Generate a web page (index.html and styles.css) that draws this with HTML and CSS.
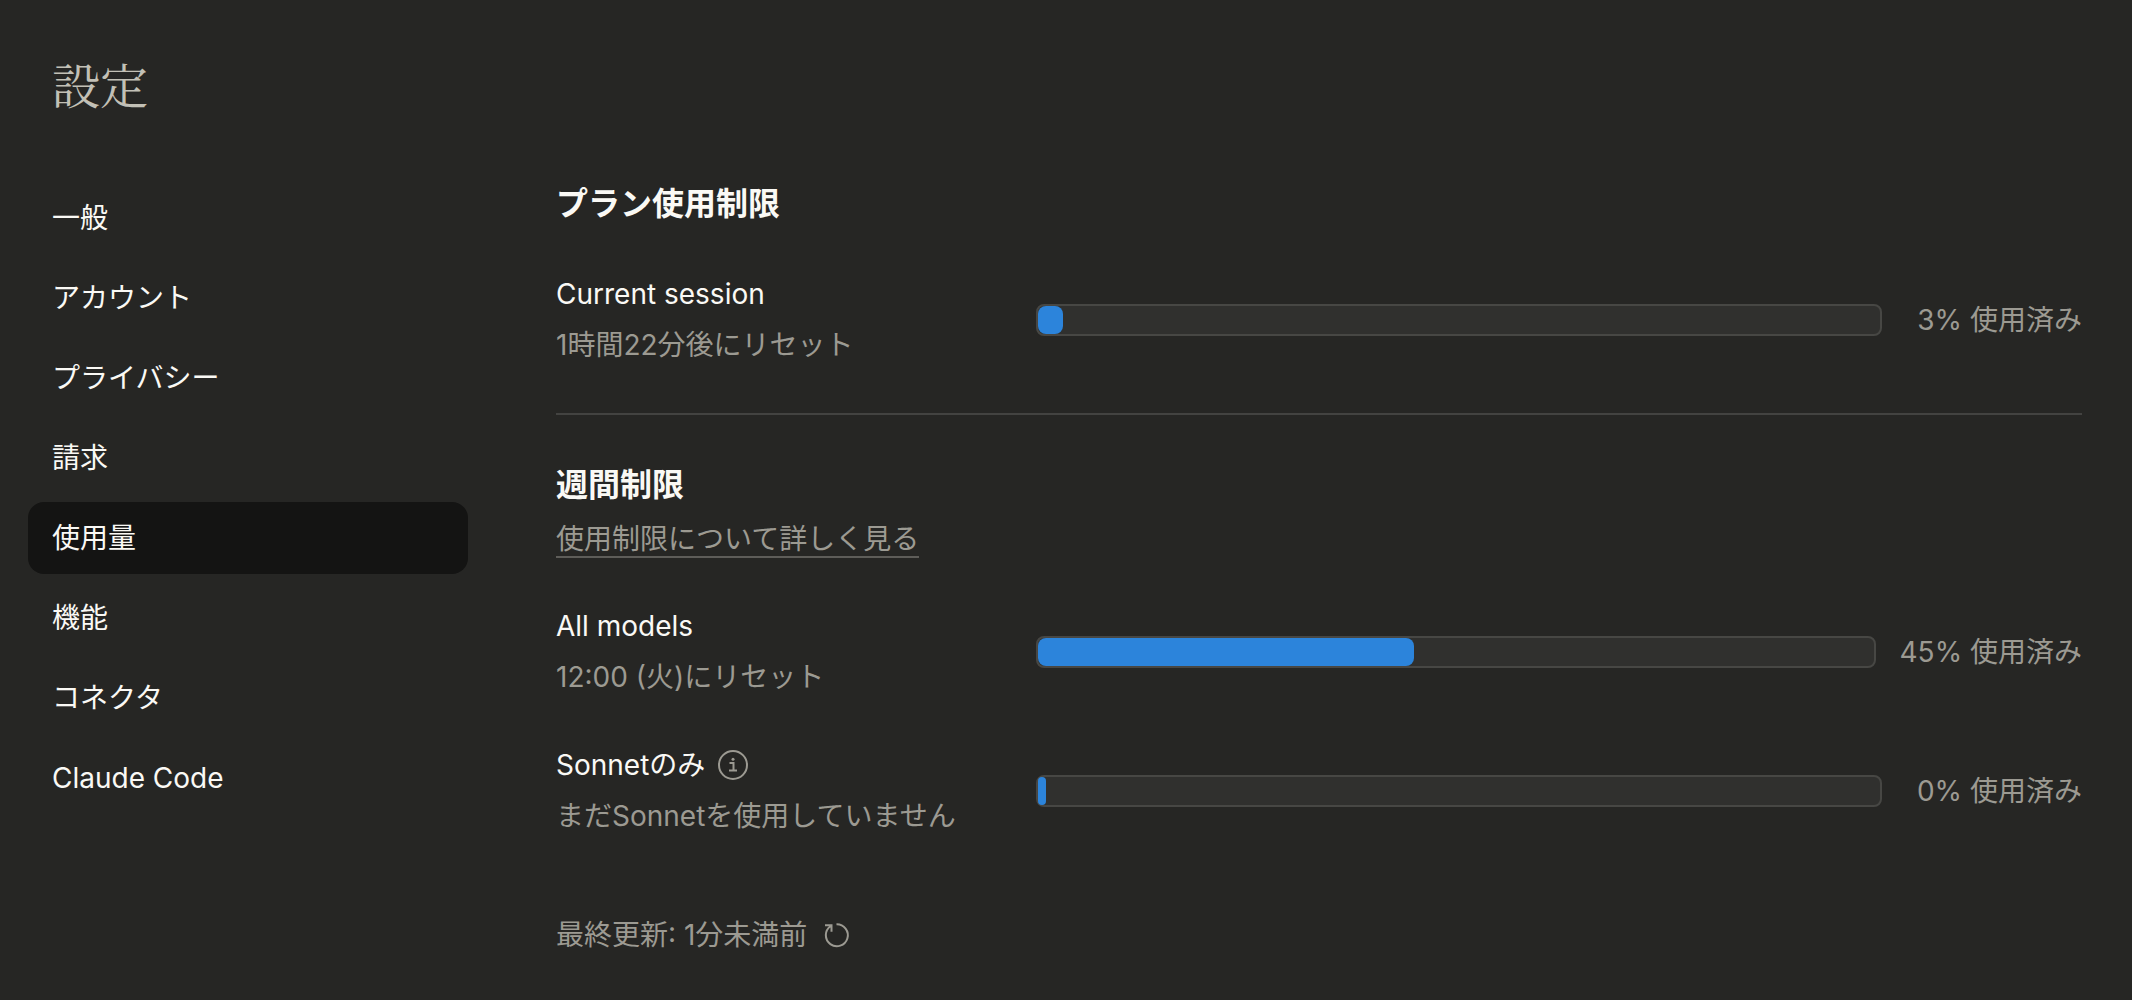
FILE: index.html
```html
<!DOCTYPE html>
<html lang="ja">
<head>
<meta charset="utf-8">
<meta name="viewport" content="width=device-width, initial-scale=1">
<title>設定</title>
<link rel="stylesheet" href="styles.css">
</head>
<body>
<div class="page">
  <h1 class="page-title">設定</h1>
  <div class="layout">
    <nav class="nav" aria-label="設定">
      <a class="nav-item" href="#general">一般</a>
      <a class="nav-item" href="#account">アカウント</a>
      <a class="nav-item" href="#privacy">プライバシー</a>
      <a class="nav-item" href="#billing">請求</a>
      <a class="nav-item active" href="#usage" aria-current="page">使用量</a>
      <a class="nav-item" href="#features">機能</a>
      <a class="nav-item" href="#connectors">コネクタ</a>
      <a class="nav-item" href="#claude-code">Claude Code</a>
    </nav>
    <main class="content">
      <section class="section">
        <h2 class="heading">プラン使用制限</h2>
        <div class="limit">
          <div class="limit-info">
            <div class="limit-name" id="session">Current session</div>
            <div class="muted">1時間22分後にリセット</div>
          </div>
          <div class="meter" role="progressbar" aria-labelledby="session" aria-valuenow="3" aria-valuemin="0" aria-valuemax="100"><div class="meter-fill" style="width: 3%"></div></div>
          <div class="percent">3% 使用済み</div>
        </div>
      </section>
      <hr class="divider">
      <section class="section">
        <div class="heading-group">
          <h2 class="heading">週間制限</h2>
          <a class="more" href="#limits">使用制限について詳しく見る</a>
        </div>
        <div class="limit">
          <div class="limit-info">
            <div class="limit-name" id="all-models">All models</div>
            <div class="muted">12:00 (火)にリセット</div>
          </div>
          <div class="meter" role="progressbar" aria-labelledby="all-models" aria-valuenow="45" aria-valuemin="0" aria-valuemax="100"><div class="meter-fill" style="width: 45%"></div></div>
          <div class="percent">45% 使用済み</div>
        </div>
        <div class="limit">
          <div class="limit-info">
            <div class="limit-name">
              <span id="sonnet">Sonnetのみ</span>
              <button class="icon-button" type="button" aria-label="詳細">
                <svg class="icon-info" viewBox="0 0 32 32" fill="none" stroke="currentColor" stroke-width="2">
                  <circle cx="16" cy="16" r="14"/>
                  <path d="M12.5 14h4v7.5M12 21.5h8"/>
                  <circle cx="16" cy="10.200" r="1.500" fill="currentColor" stroke="none"/>
                </svg>
              </button>
            </div>
            <div class="muted">まだSonnetを使用していません</div>
          </div>
          <div class="meter" role="progressbar" aria-labelledby="sonnet" aria-valuenow="0" aria-valuemin="0" aria-valuemax="100"><div class="meter-fill" style="width: 0%"></div></div>
          <div class="percent">0% 使用済み</div>
        </div>
      </section>
      <footer class="updated muted">
        <span>最終更新: 1分未満前</span>
        <button class="icon-button" type="button" aria-label="更新">
          <svg class="icon-refresh" viewBox="0 0 28 28" fill="none" stroke="currentColor" stroke-width="2">
            <path d="M13.500 3.200A11 11 0 1 1 7.500 5.200M2 4.200h6.500v6.600"/>
          </svg>
        </button>
      </footer>
    </main>
  </div>
</div>
</body>
</html>
```
FILE: styles.css
```css
* {
  box-sizing: border-box;
}

body {
  margin: 0;
  background: #262624;
  color: #faf9f5;
  font-family: Inter, "Noto Sans CJK JP", sans-serif;
  font-size: 28px;
  font-weight: 400;
  line-height: 40px;
}

.page {
  min-height: 100vh;
  padding: 56px 50px 40px 28px;
}

.page-title {
  margin: 0 0 70px;
  padding-left: 24px;
  color: #c2c0b6;
  font-family: "Noto Serif CJK JP", "Noto Serif JP", "Noto Sans CJK JP", serif;
  font-size: 48px;
  font-weight: 400;
  line-height: 56px;
}

.layout {
  display: flex;
  align-items: flex-start;
  gap: 88px;
}

.nav {
  display: flex;
  flex: none;
  flex-direction: column;
  gap: 8px;
  width: 440px;
}

.nav-item {
  padding: 16px 24px;
  border-radius: 16px;
  color: inherit;
  text-decoration: none;
}

.nav-item.active {
  background: #141413;
}

.content {
  flex: 1;
  min-width: 0;
}

.section {
  display: flex;
  flex-direction: column;
  gap: 48px;
}

.heading {
  margin: 0;
  font-size: 32px;
  font-weight: 700;
  line-height: 44px;
}

.heading-group {
  display: flex;
  flex-direction: column;
  align-items: flex-start;
  gap: 15px;
}

.more {
  border-bottom: 2px solid #5e5d59;
  color: #9c9a92;
  line-height: 34px;
  text-decoration: none;
}

.limit {
  display: flex;
  align-items: center;
  gap: 24px;
}

.limit-info {
  display: flex;
  flex: none;
  flex-direction: column;
  gap: 11px;
  width: 456px;
  white-space: nowrap;
}

.limit-name {
  display: flex;
  align-items: center;
  gap: 12px;
}

.muted {
  color: #9c9a92;
}

.meter {
  flex: 1;
  height: 32px;
  border: 2px solid #474744;
  border-radius: 8px;
  background: #30302e;
}

.meter-fill {
  min-width: 8px;
  height: 100%;
  border-radius: 8px;
  background: #2c84db;
}

.percent {
  flex: none;
  min-width: 176px;
  color: #9c9a92;
  text-align: right;
  white-space: nowrap;
}

.divider {
  height: 2px;
  margin: 48px 0;
  border: 0;
  background: #434341;
}

.updated {
  display: flex;
  align-items: center;
  gap: 16px;
  margin-top: 79px;
}

.icon-button {
  display: flex;
  padding: 0;
  border: 0;
  background: none;
  color: #9c9a92;
  cursor: pointer;
}

.icon-info {
  width: 32px;
  height: 32px;
}

.icon-refresh {
  width: 28px;
  height: 28px;
}
```
